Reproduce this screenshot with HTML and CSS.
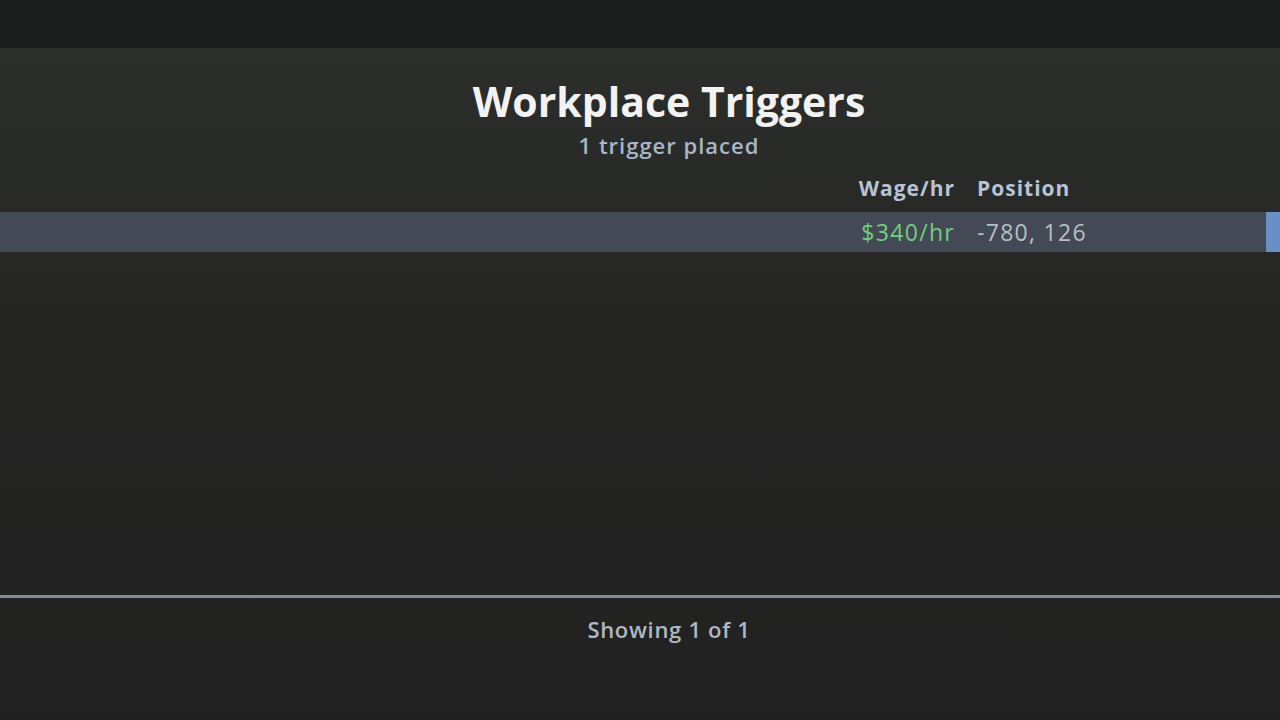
FILE: index.html
```html
<!DOCTYPE html>
<html lang="en">
<head>
    <meta charset="UTF-8">
    <meta name="viewport" content="width=device-width, initial-scale=1.0">
    <title>Workplace Triggers</title>
    <link rel="stylesheet" href="styles.css">
</head>
<body>

<div class="topbar"></div>

<div class="panel">
    <div class="panel-head">
        <h1>Workplace Triggers</h1>
        <div class="subtitle">1 trigger placed</div>
    </div>

    <div class="trigger-table">
        <div class="row header-row">
            <div class="cell"></div>
            <div class="cell wage">Wage/hr</div>
            <div class="cell pos">Position</div>
            <div class="cell"></div>
        </div>
        <div class="row data-row">
            <div class="cell"></div>
            <div class="cell wage money">$340/hr</div>
            <div class="cell pos">-780, 126</div>
            <div class="cell accent"></div>
        </div>
    </div>

    <div class="panel-foot">
        <div class="showing">Showing 1 of 1</div>
    </div>
</div>

</body>
</html>
```

FILE: styles.css
```css
html, body {
    height: 100%;
}
body {
    margin: 0;
    font-family: "Open Sans", "Noto Sans", sans-serif;
    background: #1c1d1d;
    display: flex;
    flex-direction: column;
    overflow: hidden;
}
.topbar {
    height: 48px;
    background: #1c1d1d;
    flex-shrink: 0;
}
.panel {
    flex: 1;
    display: flex;
    flex-direction: column;
    background: linear-gradient(#2c2e2b, #252624 40%, #212121);
}
.panel-head {
    text-align: center;
    padding-top: 33px;
    padding-left: 58px;
}
.panel-head h1 {
    margin: 0;
    font-size: 41px;
    line-height: 1;
    font-weight: 700;
    color: #f2f2f2;
}
.subtitle {
    margin-top: 12px;
    font-size: 22px;
    line-height: 1;
    font-weight: 600;
    letter-spacing: 1px;
    color: #a7b6c9;
}

/* trigger list */
.trigger-table {
    margin-top: 17px;
    flex: 1;
}
.row {
    display: grid;
    grid-template-columns: 1fr 100px 312px 14px;
    align-items: center;
}
.header-row {
    height: 30px;
    line-height: 30px;
    margin-bottom: 9px;
    font-size: 21px;
    font-weight: 700;
    letter-spacing: 1px;
    color: #b6c3d6;
}
.data-row {
    height: 40px;
    background: #444a55;
    font-size: 23px;
    letter-spacing: 1.3px;
    color: #b9bdc4;
}
.wage {
    text-align: right;
    margin-right: -1px;
}
.pos {
    padding-left: 23px;
}
.money {
    color: #6fcf7c;
}
.accent {
    align-self: stretch;
    background: #6a8ec6;
}

.panel-foot {
    border-top: 3px solid #7d8ca3;
    height: 122px;
    flex-shrink: 0;
}
.showing {
    text-align: center;
    margin-top: 20px;
    padding-left: 58px;
    font-size: 22px;
    line-height: 1;
    font-weight: 600;
    letter-spacing: 0.7px;
    color: #aeb7c4;
}
```
